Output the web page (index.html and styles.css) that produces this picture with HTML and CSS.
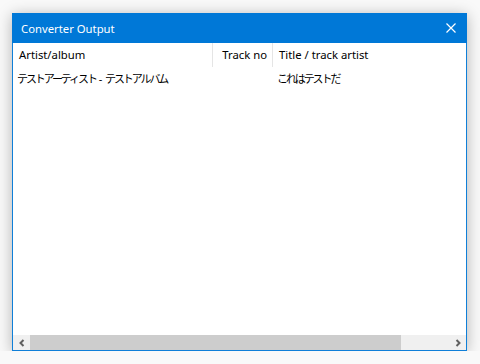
FILE: index.html
```html
<!DOCTYPE html>
<html lang="ja">
<head>
  <meta charset="UTF-8">
  <title>Converter Output</title>
  <link rel="stylesheet" href="styles.css">
</head>
<body>

  <div class="window">
    <div class="titlebar">
      <span class="title">Converter Output</span>
      <svg class="close" width="10" height="10" viewBox="0 0 10 10">
        <path d="M0.5 0.5 L9.5 9.5 M9.5 0.5 L0.5 9.5" stroke="#fff" stroke-width="1.2"/>
      </svg>
    </div>

    <div class="list">
      <div class="header">
        <div class="col col-artist">Artist/album</div>
        <div class="col col-track">Track no</div>
        <div class="col col-title">Title / track artist</div>
      </div>
      <div class="row">
        <div class="col col-artist jp">テストアーティスト<span class="sep"> - </span>テストアルバム</div>
        <div class="col col-track"></div>
        <div class="col col-title jp">これはテストだ</div>
      </div>
    </div>

    <div class="hscroll">
      <div class="arrow">
        <svg width="8" height="8" viewBox="0 0 8 8"><path d="M5.5 1 L2.5 4 L5.5 7" stroke="#606060" stroke-width="2" fill="none"/></svg>
      </div>
      <div class="thumb"></div>
      <div class="track"></div>
      <div class="arrow">
        <svg width="8" height="8" viewBox="0 0 8 8"><path d="M2.5 1 L5.5 4 L2.5 7" stroke="#606060" stroke-width="2" fill="none"/></svg>
      </div>
    </div>
  </div>

</body>
</html>
```

FILE: styles.css
```css
body {
  margin: 0;
  background: #f9f9f9;
  font-family: "Noto Sans", "Noto Sans CJK JP", sans-serif;
  font-size: 11.3px;
}
.window {
  margin: 13px 0 0 12px;
  width: 453px;
  height: 336px;
  border: 1px solid #0f7fd8;
  background: #fff;
  display: flex;
  flex-direction: column;
  box-shadow: 0 2px 14px rgba(0, 0, 0, 0.28);
}
.titlebar {
  height: 30px;
  margin: -1px -1px 0 -1px;
  background: #0078d7;
  color: #fff;
  display: flex;
  align-items: center;
  justify-content: space-between;
  padding: 0 11px 0 9px;
  flex-shrink: 0;
}
.title {
  font-size: 11.3px;
}
.list {
  flex: 1;
}
.header, .row {
  display: flex;
}
.header {
  height: 24px;
  align-items: center;
}
.header .col {
  height: 24px;
  line-height: 24px;
  border-right: 1px solid #e5e5e5;
}
.row {
  height: 20px;
  line-height: 20px;
  padding-top: 2px;
}
.col {
  box-sizing: border-box;
  white-space: nowrap;
  color: #000;
}
.jp {
  font-size: 11px;
  letter-spacing: -2.1px;
}
.sep {
  letter-spacing: 0;
}
.col-artist {
  width: 200px;
  padding-left: 6px;
}
.row .col-artist {
  padding-left: 4px;
}
.col-track {
  width: 60px;
  text-align: right;
  padding-right: 5px;
}
.col-title {
  flex: 1;
  padding-left: 6px;
}
.header .col-title {
  border-right: none;
}
.row .col-title {
  padding-left: 4px;
}
.hscroll {
  height: 15px;
  display: flex;
  background: #f0f0f0;
  flex-shrink: 0;
}
.arrow {
  width: 17px;
  display: flex;
  align-items: center;
  justify-content: center;
}
.thumb {
  width: 371px;
  background: #cdcdcd;
}
.track {
  flex: 1;
}
```
